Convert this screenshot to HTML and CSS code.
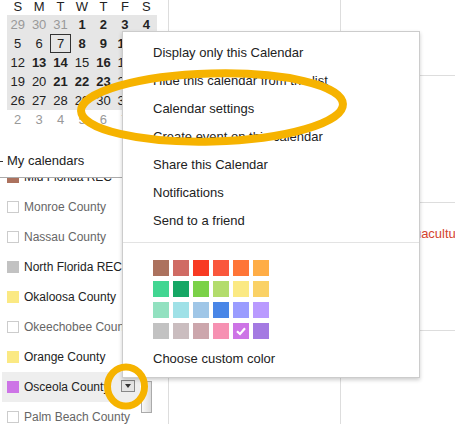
FILE: index.html
```html
<!DOCTYPE html>
<html>
<head>
    <meta charset="utf-8">
    <title>Calendar - My calendars</title>
    <link rel="stylesheet" href="styles.css">
</head>
<body>
    <div class="app">
        <aside class="sidebar">
            <div class="minical">
                <div class="mc-head">
                    <span>S</span><span>M</span><span>T</span><span>W</span><span>T</span><span>F</span><span>S</span>
                </div>
                <div class="mc-month">
                    <span class="other">29</span><span class="other">30</span><span class="other">31</span><span class="busy">1</span><span class="busy">2</span><span class="busy">3</span><span class="busy">4</span>
                    <span>5</span><span>6</span><span class="today">7</span><span class="busy">8</span><span class="busy">9</span><span class="busy">10</span><span>11</span>
                    <span>12</span><span class="busy">13</span><span class="busy">14</span><span>15</span><span class="busy">16</span><span>17</span><span>18</span>
                    <span>19</span><span>20</span><span class="busy">21</span><span class="busy">22</span><span class="busy">23</span><span>24</span><span>25</span>
                    <span>26</span><span>27</span><span>28</span><span>29</span><span>30</span><span>31</span><span>1</span>
                </div>
                <div class="mc-next">
                    <span>2</span><span>3</span><span>4</span><span>5</span><span>6</span><span>7</span><span>8</span>
                </div>
            </div>

            <div class="section-head">
                <span class="toggle"></span>
                My calendars
            </div>
            <div class="cal-list-wrap">
                <ul class="cal-list">
                    <li class="cal-item"><span class="swatch" style="background:#ac725e;border-color:#ac725e"></span>Mid Florida REC</li>
                    <li class="cal-item off"><span class="swatch"></span>Monroe County</li>
                    <li class="cal-item off"><span class="swatch"></span>Nassau County</li>
                    <li class="cal-item"><span class="swatch" style="background:#c2c2c2;border-color:#c2c2c2"></span>North Florida REC</li>
                    <li class="cal-item"><span class="swatch" style="background:#fbe983;border-color:#fbe983"></span>Okaloosa County</li>
                    <li class="cal-item off"><span class="swatch"></span>Okeechobee County</li>
                    <li class="cal-item"><span class="swatch" style="background:#fbe983;border-color:#fbe983"></span>Orange County</li>
                    <li class="cal-item hover"><span class="swatch" style="background:#cd74e6;border-color:#cd74e6"></span>Osceola County<span class="drop-btn"></span></li>
                    <li class="cal-item off"><span class="swatch"></span>Palm Beach County</li>
                </ul>
                <div class="scroll-thumb"></div>
            </div>
        </aside>

        <main class="month-grid">
            <div class="cell"></div><div class="cell"></div>
            <div class="cell"></div><div class="cell"></div>
            <div class="cell"></div><div class="cell"><div class="event">Aquaculture</div></div>
            <div class="cell"></div><div class="cell"></div>
        </main>
    </div>

    <div class="menu">
        <ul class="menu-items">
            <li>Display only this Calendar</li>
            <li>Hide this calendar from the list</li>
            <li>Calendar settings</li>
            <li>Create event on this calendar</li>
            <li>Share this Calendar</li>
            <li>Notifications</li>
            <li>Send to a friend</li>
        </ul>
        <div class="palette">
            <span style="background:#ac725e"></span><span style="background:#d06b64"></span><span style="background:#f83a22"></span><span style="background:#fa573c"></span><span style="background:#ff7537"></span><span style="background:#ffad46"></span>
            <span style="background:#42d692"></span><span style="background:#16a765"></span><span style="background:#7bd148"></span><span style="background:#b3dc6c"></span><span style="background:#fbe983"></span><span style="background:#fad165"></span>
            <span style="background:#92e1c0"></span><span style="background:#9fe1e7"></span><span style="background:#9fc6e7"></span><span style="background:#4986e7"></span><span style="background:#9a9cff"></span><span style="background:#b99aff"></span>
            <span style="background:#c2c2c2"></span><span style="background:#cabdbf"></span><span style="background:#cca6ac"></span><span style="background:#f691b2"></span>
            <span style="background:#cd74e6"><svg width="16" height="16" viewBox="0 0 16 16"><path d="M4 8.2 L7 11 L12 5.2" fill="none" stroke="#fff" stroke-width="2.2"/></svg></span>
            <span style="background:#a47ae2"></span>
        </div>
        <div class="custom-color">Choose custom color</div>
    </div>

    <svg class="marks" width="455" height="424" viewBox="0 0 455 424">
        <ellipse cx="212" cy="107.5" rx="131" ry="34" fill="none" stroke="#f6b300" stroke-width="8" transform="rotate(-1.5 212 107.5)"/>
        <ellipse cx="126" cy="386.5" rx="18.5" ry="19.5" fill="none" stroke="#f6b300" stroke-width="7"/>
    </svg>
</body>
</html>
```

FILE: styles.css
```css
body {
    margin: 0;
    font-family: "Liberation Sans", Arial, sans-serif;
    font-size: 13px;
    color: #222;
    background-color: white;
}

.app {
    display: flex;
    width: 455px;
    height: 424px;
    overflow: hidden;
}

/* left column */

.sidebar {
    width: 168px;
    flex: none;
}

.minical {
    width: 150px;
    margin-left: 7px;
}

.mc-head,
.mc-month,
.mc-next {
    display: grid;
    grid-template-columns: repeat(7, 1fr);
    text-align: center;
}

.mc-head {
    height: 15px;
    line-height: 13px;
}

.mc-month {
    background-color: #e6e6e6;
}

.mc-month span,
.mc-next span {
    height: 19px;
    line-height: 20px;
}

.mc-month .busy {
    font-weight: bold;
}

.mc-month .other,
.mc-next span {
    color: #999;
}

.mc-month .today {
    border: 1px solid #333;
    line-height: 18px;
    box-sizing: border-box;
}

.section-head {
    display: flex;
    align-items: center;
    gap: 4px;
    width: 157px;
    margin-top: 14px;
    padding-top: 2px;
    line-height: 32px;
    border-bottom: 1px solid #aaa;
}

.toggle {
    width: 3px;
    height: 1px;
    background-color: #333;
}

.cal-list-wrap {
    position: relative;
    height: 246px;
    overflow: hidden;
}

.cal-list {
    list-style: none;
    margin: -16px 0 0 0;
    padding: 0;
}

.cal-item {
    display: flex;
    align-items: center;
    gap: 5px;
    width: 138px;
    height: 30px;
    margin-left: 2px;
    padding-left: 5px;
    box-sizing: border-box;
    font-size: 12px;
    white-space: nowrap;
}

.cal-item.off {
    color: #666;
}

.cal-item.hover {
    background-color: #eee;
}

.swatch {
    width: 12px;
    height: 12px;
    border: 1px solid #ccc;
    box-sizing: border-box;
    flex: none;
}

.drop-btn {
    position: relative;
    width: 14px;
    height: 12px;
    margin-left: auto;
    margin-right: 5px;
    margin-top: -3px;
    border: 1px solid #888;
    background-color: #e4e4e4;
    box-sizing: border-box;
}

.drop-btn::after {
    content: "";
    position: absolute;
    left: 3px;
    top: 3px;
    border-left: 3px solid transparent;
    border-right: 3px solid transparent;
    border-top: 4px solid #333;
}

.scroll-thumb {
    position: absolute;
    left: 141px;
    top: 203px;
    width: 11px;
    height: 32px;
    border: 1px solid #aaa;
    background: linear-gradient(to right, #fafafa, #dcdcdc);
    box-sizing: border-box;
}

/* month grid */

.month-grid {
    flex: 1;
    display: grid;
    grid-template-columns: 172px 172px;
    grid-template-rows: 76px 127px 128px 128px;
    border-left: 1px solid #ddd;
}

.cell {
    border-right: 1px solid #ddd;
    border-bottom: 1px solid #ddd;
}

.event {
    margin: 23px 0 0 57px;
    line-height: 16px;
    color: #d4442e;
    white-space: nowrap;
}

/* popup menu */

.menu {
    position: absolute;
    left: 122px;
    top: 31px;
    width: 298px;
    height: 347px;
    box-sizing: border-box;
    background-color: white;
    border: 1px solid #ccc;
    box-shadow: 0 2px 4px rgba(0,0,0,0.2);
    padding: 7px 0 4px 0;
}

.menu-items {
    list-style: none;
    margin: 0;
    padding: 0 0 7px 0;
    border-bottom: 1px solid #e3e3e3;
}

.menu-items li {
    line-height: 28px;
    padding-left: 30px;
}

.palette {
    display: grid;
    grid-template-columns: repeat(6, 16px);
    grid-auto-rows: 16px;
    column-gap: 4px;
    row-gap: 5px;
    padding: 17px 0 0 30px;
}

.palette span {
    display: block;
}

.palette svg {
    display: block;
}

.custom-color {
    margin-top: 6px;
    line-height: 28px;
    padding-left: 30px;
}

.marks {
    position: absolute;
    left: 0;
    top: 0;
    pointer-events: none;
}
```
